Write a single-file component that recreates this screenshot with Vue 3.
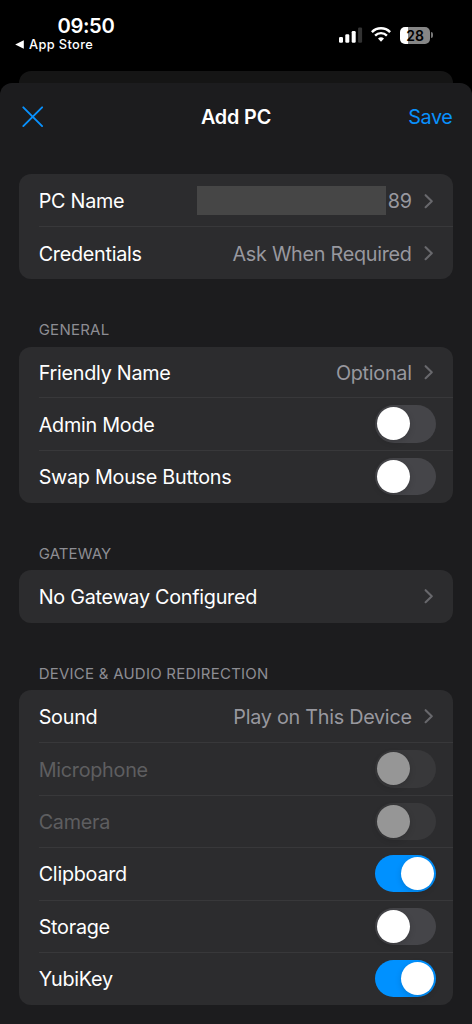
<script setup>
const sections = [
  {
    id: 'pc',
    title: '',
    rows: [
      { label: 'PC Name', kind: 'redacted', value: '89' },
      { label: 'Credentials', kind: 'link', value: 'Ask When Required' },
    ],
  },
  {
    id: 'general',
    title: 'GENERAL',
    rows: [
      { label: 'Friendly Name', kind: 'link', value: 'Optional' },
      { label: 'Admin Mode', kind: 'toggle', on: false },
      { label: 'Swap Mouse Buttons', kind: 'toggle', on: false },
    ],
  },
  {
    id: 'gateway',
    title: 'GATEWAY',
    rows: [{ label: 'No Gateway Configured', kind: 'link', value: '' }],
  },
  {
    id: 'device',
    title: 'DEVICE & AUDIO REDIRECTION',
    rows: [
      { label: 'Sound', kind: 'link', value: 'Play on This Device' },
      { label: 'Microphone', kind: 'toggle', on: false, disabled: true },
      { label: 'Camera', kind: 'toggle', on: false, disabled: true },
      { label: 'Clipboard', kind: 'toggle', on: true },
      { label: 'Storage', kind: 'toggle', on: false },
      { label: 'YubiKey', kind: 'toggle', on: true },
    ],
  },
]
</script>

<template>
  <div class="screen">
    <div class="status">
      <div class="status-left">
        <div class="clock">09:50</div>
        <div class="back">
          <svg width="9" height="9" viewBox="0 0 9 9"><path d="M0.2 4.5 L8.8 0.3 V8.7 Z" fill="#fff" /></svg>
          <span>App Store</span>
        </div>
      </div>
      <div class="status-right">
        <svg class="signal" width="24" height="16" viewBox="0 0 24 16">
          <rect x="0" y="10" width="4" height="5.8" rx="1.2" fill="#fff" />
          <rect x="6.3" y="7.2" width="4" height="8.6" rx="1.2" fill="#fff" />
          <rect x="12.7" y="4" width="4" height="11.8" rx="1.2" fill="#fff" />
          <rect x="19.1" y="0.6" width="4" height="15.2" rx="1.2" fill="#333" />
        </svg>
        <svg class="wifi" width="20" height="15" viewBox="0 0 20 15">
          <path d="M0.9 5.1 A12.8 12.8 0 0 1 19.1 5.1" fill="none" stroke="#fff" stroke-width="2.5" />
          <path d="M4.1 8.6 A8.3 8.3 0 0 1 15.9 8.6" fill="none" stroke="#fff" stroke-width="2.4" />
          <path d="M10 14.8 L7 11.6 A4.4 4.4 0 0 1 13 11.6 Z" fill="#fff" />
        </svg>
        <div class="battery"><span>28</span></div>
        <div class="battery-tip"></div>
      </div>
    </div>

    <div class="behind"></div>
    <div class="sheet">
      <header class="nav">
        <svg class="close" width="22" height="22" viewBox="0 0 22 22">
          <path d="M1.3 1.3 L20.1 20.1 M20.1 1.3 L1.3 20.1" stroke="#0991fd" stroke-width="1.9" stroke-linecap="round" />
        </svg>
        <h1>Add PC</h1>
        <button class="save">Save</button>
      </header>

      <section v-for="s in sections" :key="s.id" :class="['section', s.id]">
        <h2 v-if="s.title">{{ s.title }}</h2>
        <div class="card">
          <div v-for="r in s.rows" :key="r.label" :class="['row', { disabled: r.disabled }]">
            <span class="label">{{ r.label }}</span>
            <span v-if="r.kind === 'toggle'" :class="['toggle', { on: r.on }]"><i></i></span>
            <template v-else>
              <span v-if="r.kind === 'redacted'" class="mask"></span>
              <span class="value">{{ r.value }}</span>
              <svg class="chevron" width="10" height="16" viewBox="0 0 10 16">
                <path d="M1.6 2.2 L7.8 8.2 L1.6 14.2" fill="none" stroke="#68686c" stroke-width="2.1" stroke-linecap="round" stroke-linejoin="round" />
              </svg>
            </template>
          </div>
        </div>
      </section>
    </div>
  </div>
</template>

<style>
html,
body {
  background: #000;
}
</style>

<style scoped>
.screen {
  width: 472px;
  height: 1024px;
  overflow: hidden;
  display: flex;
  flex-direction: column;
  background: #000;
  color: #fff;
  font-family: Inter, "Liberation Sans", sans-serif;
}
.status {
  height: 71px;
  flex: none;
  display: flex;
  justify-content: space-between;
}
.status-left {
  padding: 14px 0 0 15px;
}
.clock {
  height: 24px;
  padding-left: 42.5px;
  font-size: 20.2px;
  line-height: 24px;
  font-weight: 600;
  letter-spacing: -0.35px;
}
.back {
  display: flex;
  align-items: center;
  gap: 5px;
  height: 13px;
  font-size: 12.8px;
  line-height: 13px;
  font-weight: 500;
  letter-spacing: 0.38px;
}
.status-right {
  display: flex;
  align-items: flex-start;
  padding: 27px 39px 0 0;
}
.wifi {
  margin: 0 9px 0 8px;
}
.battery {
  width: 30px;
  height: 17px;
  border-radius: 5px;
  background: linear-gradient(90deg, #fff 28%, #868686 28%);
  color: #000;
  font-size: 14px;
  line-height: 17px;
  font-weight: 600;
  text-align: center;
}
.battery-tip {
  width: 2px;
  height: 6px;
  margin: 5px 0 0 1px;
  border-radius: 0 2px 2px 0;
  background: #777;
}
.behind {
  flex: none;
  height: 12px;
  margin: 0 19.3px;
  border-radius: 12px 12px 0 0;
  background: #151515;
}
.sheet {
  flex: 1;
  min-height: 0;
  border-radius: 12px 12px 0 0;
  background: #1c1c1e;
}
.nav {
  display: grid;
  grid-template-columns: 1fr auto 1fr;
  align-items: center;
  height: 67px;
  padding: 0 19.5px 0 21.5px;
}
.close {
  display: block;
}
h1 {
  margin: 0 0 0 -2px;
  font-size: 19.8px;
  font-weight: 600;
  letter-spacing: -0.15px;
}
.save {
  justify-self: end;
  padding: 0;
  border: 0;
  background: none;
  color: #0991fd;
  font: 400 19.8px Inter, sans-serif;
  letter-spacing: -0.35px;
}
.section {
  padding: 0 19.3px;
}
.section.pc {
  padding-top: 24.3px;
}
.section.general {
  padding-top: 41px;
}
.section.gateway {
  padding-top: 41px;
}
.section.device {
  padding-top: 41px;
}
h2 {
  margin: 0;
  height: 26.6px;
  padding-left: 19.4px;
  color: #8d8d93;
  font-size: 15px;
  line-height: 19px;
  font-weight: 400;
  letter-spacing: 0.24px;
}
.section.gateway h2 {
  letter-spacing: 0.1px;
}
.card {
  overflow: hidden;
  border-radius: 12px;
  background: #2c2c2e;
}
.row {
  position: relative;
  display: flex;
  align-items: center;
  height: 52.45px;
  padding: 0 17px 0 19.4px;
  font-size: 19.8px;
  line-height: 26px;
  letter-spacing: -0.27px;
}
.general .row:first-child {
  height: 51px;
}
.row + .row::before {
  content: "";
  position: absolute;
  top: -0.5px;
  left: 19.4px;
  right: 0;
  height: 1px;
  background: #38383a;
}
.label,
.value {
  padding-top: 1.4px;
}
.label {
  margin-right: auto;
}
.disabled .label {
  color: #5e5e60;
}
.value {
  color: #98989f;
}
.mask {
  width: 189.5px;
  height: 29.5px;
  margin-right: 1.6px;
  background: #464646;
}
.chevron {
  margin: 0 2px 0 12px;
}
.toggle {
  display: flex;
  width: 56.8px;
  height: 33px;
  padding: 2.2px;
  border-radius: 19px;
  background: #454549;
}
.toggle i {
  width: 33px;
  height: 33px;
  border-radius: 50%;
  background: #fff;
  box-shadow: 0 2px 6px rgba(0, 0, 0, 0.15);
}
.toggle.on {
  justify-content: flex-end;
  background: #0091ff;
}
.disabled .toggle {
  background: #38383a;
}
.disabled .toggle i {
  background: #969696;
}
</style>
